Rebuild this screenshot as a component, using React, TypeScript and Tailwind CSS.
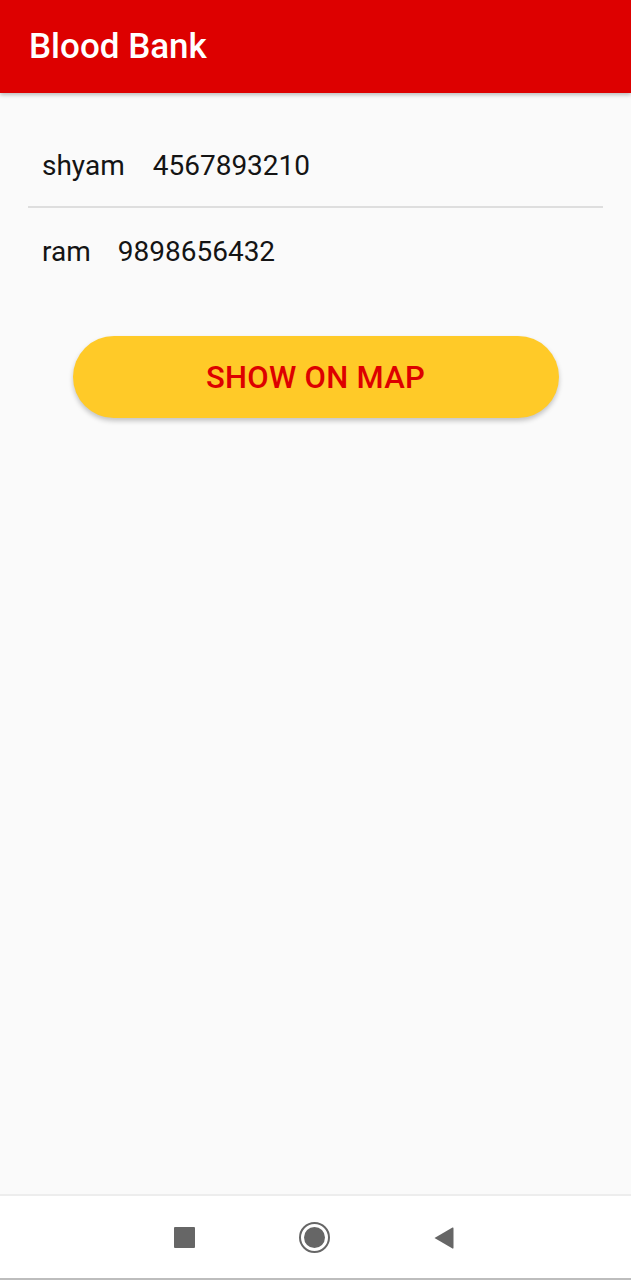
import React from "react";

export default function App() {
  const font = { fontFamily: "Roboto, 'Noto Sans', sans-serif" };
  return (
    <div className="w-[631px] h-[1280px] flex flex-col bg-[#fafafa] overflow-hidden" style={font}>
      <header className="h-[93px] shrink-0 bg-[#dd0000] flex items-center pl-[29px] shadow-[0_2px_4px_rgba(0,0,0,0.25)] z-10">
        <h1 className="text-white text-[35px] font-medium leading-none pb-[1px]">Blood Bank</h1>
      </header>
      <main className="flex-1 px-[28px] flex flex-col">
        <div className="flex items-center pl-[14px] pt-[53px] pb-[20px] text-[28px] leading-[40px] text-[#141414]">
          <span>shyam</span>
          <span className="ml-[28px]">4567893210</span>
        </div>
        <div className="h-[2px] bg-[#dedede]" />
        <div className="flex items-center pl-[14px] pt-[24px] text-[28px] leading-[40px] text-[#141414]">
          <span>ram</span>
          <span className="ml-[27px]">9898656432</span>
        </div>
        <button className="mt-[64px] mx-auto w-[486px] h-[82px] rounded-full bg-[#ffca28] text-[#dd0000] text-[31px] font-medium tracking-[0.3px] shadow-[0_3px_5px_rgba(0,0,0,0.22)] flex items-center justify-center pt-[3px]">
          SHOW ON MAP
        </button>
      </main>
      <nav className="h-[86px] shrink-0 bg-white border-t-[2px] border-[#ededed] border-b-[2px] border-b-[#bdbdbd] flex items-center justify-center">
        <div className="relative w-full h-full">
          <div className="absolute left-[174px] top-[31px] w-[21px] h-[21px] bg-[#666666] rounded-[1px]" />
          <div className="absolute left-[299px] top-[26px] w-[31px] h-[31px] rounded-full border-[2px] border-[#666666] flex items-center justify-center">
            <div className="w-[21px] h-[21px] rounded-full bg-[#666666]" />
          </div>
          <svg className="absolute left-[433px] top-[30px]" width="21" height="24" viewBox="0 0 21 24">
            <path d="M1.5 12 L19.5 1.5 Q20.5 1 20.5 2.5 L20.5 21.5 Q20.5 23 19.5 22.5 Z" fill="#666666" />
          </svg>
        </div>
      </nav>
    </div>
  );
}
